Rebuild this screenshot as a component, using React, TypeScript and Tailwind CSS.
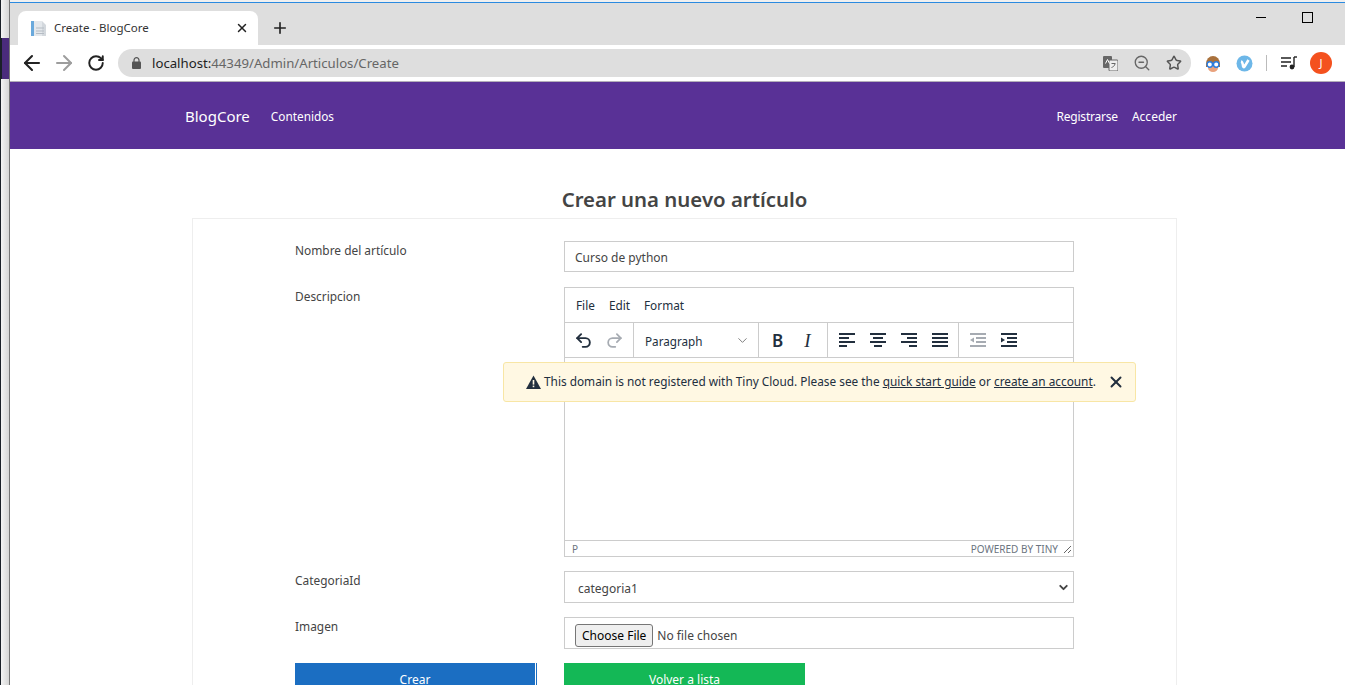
import React from "react";
import { ArrowLeft, ArrowRight, ChevronDown, Plus, Redo2, RotateCw, Star, Undo2, X, ZoomOut } from "lucide-react";

const font = { fontFamily: '"Noto Sans", sans-serif' };

const BrowserChrome: React.FC = () => (
  <div className="shrink-0">
    <div className="h-[2px] bg-[#f0f0f0]" />
    <div className="h-px bg-[#2b8ae0]" />
    <div className="flex h-[42px] items-end bg-[#dedede] pl-[8px]">
      <div className="flex h-[34px] w-[240px] items-center rounded-t-lg bg-white pl-[12px] pr-[9px]">
        <svg width="17" height="17" viewBox="0 0 17 17" className="mr-[7px]">
          <rect x="1" y="1" width="3" height="15" fill="#6aa9dc" />
          <rect x="4" y="1" width="8" height="15" fill="#e4e8ec" />
          <path d="M12 1l4 4v11h-4z" fill="#d3d8dd" />
          <path d="M6 8h8M6 11h8M6 13.5h8" stroke="#b5bcc4" strokeWidth="1" />
        </svg>
        <span className="flex-1 text-[11.5px] text-[#333]">Create - BlogCore</span>
        <X size={14} strokeWidth={2.5} className="text-[#222]" />
      </div>
      <Plus size={18} strokeWidth={2.2} className="mb-[8px] ml-[13px] text-[#222]" />
      <div className="flex-1" />
      <div className="mb-[22px] flex items-center gap-[36px] pr-[32px]">
        <div className="h-px w-[10px] bg-black" />
        <div className="h-[11px] w-[11px] border border-black" />
      </div>
    </div>
    <div className="flex h-[37px] items-center border-b border-[#b3aeb9] bg-white pl-[10px] pr-[12px]">
      <ArrowLeft size={24} strokeWidth={2.1} className="text-[#222]" />
      <ArrowRight size={24} strokeWidth={2} className="ml-[8px] text-[#9d9d9d]" />
      <RotateCw size={18} strokeWidth={2.6} className="ml-[11px] text-[#222]" />
      <div className="ml-[13px] flex h-[28px] w-[1073px] items-center rounded-full bg-[#dedede] pl-[14px] pr-[9px]">
        <svg width="9" height="12" viewBox="0 0 9 12">
          <path d="M2 5V3.2a2.5 2.5 0 0 1 5 0V5" stroke="#555" strokeWidth="1.2" fill="none" />
          <rect x="0" y="4.5" width="9" height="7.5" rx="1" fill="#555" />
        </svg>
        <span className="ml-[11px] flex-1 pt-[2px] text-[13.2px] text-[#666]">
          <span className="text-[#222]">localhost:</span>44349/Admin/Articulos/Create
        </span>
        <svg width="15" height="15" viewBox="0 0 15 15">
          <rect x="0" y="0" width="9" height="12" rx="1" fill="#666" />
          <rect x="6" y="4" width="9" height="11" rx="1" fill="#eee" stroke="#666" />
          <path d="M2.5 7.5l2-4 2 4" stroke="#fff" fill="none" />
          <path d="M8.5 7.5h4M10.5 7v1M12 8c-.5 2-2 3-3.5 3.5" stroke="#666" fill="none" />
        </svg>
        <ZoomOut size={18} strokeWidth={1.8} className="ml-[15px] text-[#666]" />
        <Star size={16} strokeWidth={2.2} className="ml-[15px] text-[#555]" />
      </div>
      <svg width="16" height="17" viewBox="0 0 16 17" className="ml-[14px]">
        <path d="M1 9a7 8 0 0 1 14 0v3H1z" fill="#a9713c" />
        <path d="M3 9h10v4a5 4 0 0 1-10 0z" fill="#e9a27d" />
        <circle cx="4.8" cy="9.5" r="2.7" fill="#fff" stroke="#2a7de1" strokeWidth="1.4" />
        <circle cx="11.2" cy="9.5" r="2.7" fill="#fff" stroke="#2a7de1" strokeWidth="1.4" />
      </svg>
      <svg width="17" height="17" viewBox="0 0 17 17" className="ml-[15px]">
        <circle cx="8.5" cy="8.5" r="8" fill="#6db7e8" />
        <path d="M5 6.5c1 .2 1.7.8 2.2 5 .5.8 1 .8 1.3.2L12.5 5" stroke="#fff" strokeWidth="2.6" fill="none" />
      </svg>
      <div className="ml-[13px] h-[16px] w-px bg-[#bbb]" />
      <svg width="16" height="14" viewBox="0 0 16 14" className="ml-[14px]">
        <path d="M0 2h10M0 6h10M0 10h6" stroke="#222" strokeWidth="1.4" />
        <path d="M13 1v10" stroke="#222" strokeWidth="1.4" />
        <path d="M13 1h3" stroke="#222" strokeWidth="1.4" />
        <circle cx="11" cy="11" r="2.4" fill="#222" />
      </svg>
      <div className="ml-[13px] flex h-[22px] w-[22px] items-center justify-center rounded-full bg-[#f4511e] text-[11px] text-white">
        J
      </div>
    </div>
  </div>
);

const NavBar: React.FC = () => (
  <nav className="flex h-[67px] shrink-0 items-center bg-[#593196] pl-[175px] pr-[168px] pt-[3px] text-white">
    <span className="pb-[2px] text-[15px]">BlogCore</span>
    <span className="ml-[21px] text-[11.8px]">Contenidos</span>
    <div className="flex-1" />
    <span className="text-[12px] tracking-[-0.2px]">Registrarse</span>
    <span className="ml-[14px] text-[12px]">Acceder</span>
  </nav>
);

const ToolGroup: React.FC<{ className?: string; children: React.ReactNode }> = ({ className, children }) => (
  <div className={`flex h-full items-center border-r border-[#cccccc] ${className ?? ""}`}>{children}</div>
);

// tiny's align icons: four bars, [x, width] per row
const BarsIcon: React.FC<{ rows: number[][] }> = ({ rows }) => (
  <svg width="16" height="14" viewBox="0 0 16 14" fill="#222f3e">
    {rows.map(([x, w], i) => (
      <rect key={i} x={x} y={i * 4} width={w} height="2" />
    ))}
  </svg>
);

const IndentIcon: React.FC<{ out?: boolean }> = ({ out }) => (
  <svg width="16" height="14" viewBox="0 0 16 14" fill={out ? "#a6abb2" : "#222f3e"}>
    <rect x="0" y="0" width="16" height="2" />
    <rect x="6" y="4" width="10" height="2" />
    <rect x="6" y="8" width="10" height="2" />
    <rect x="0" y="12" width="16" height="2" />
    {out ? <path d="M0 7l4-2.6v5.2z" /> : <path d="M4 7L0 4.4v5.2z" />}
  </svg>
);

const Editor: React.FC = () => (
  <div className="relative flex h-[270px] w-[510px] flex-col border border-[#cccccc] text-[#222f3e]">
    <div className="flex h-[35px] shrink-0 items-center gap-[14px] border-b border-[#cccccc] pl-[11px] pt-[2px] text-[11.8px]">
      <span>File</span>
      <span>Edit</span>
      <span>Format</span>
    </div>
    <div className="flex h-[35px] shrink-0 items-center border-b border-[#cccccc]">
      <ToolGroup className="w-[69px] gap-[12px] pl-[9px]">
        <Undo2 size={19} strokeWidth={2.4} />
        <Redo2 size={19} strokeWidth={2.2} className="text-[#a6abb2]" />
      </ToolGroup>
      <ToolGroup className="w-[125px] justify-between pl-[11px] pr-[8px] text-[11.7px]">
        <span className="pt-[4px]">Paragraph</span>
        <ChevronDown size={15} strokeWidth={1.5} className="text-[#777]" />
      </ToolGroup>
      <ToolGroup className="w-[69px] pl-[13px]">
        <span className="text-[17px] font-semibold leading-none">B</span>
        <span className="ml-[21px] text-[19px] italic leading-none" style={{ fontFamily: '"Liberation Serif", serif' }}>
          I
        </span>
      </ToolGroup>
      <ToolGroup className="w-[131px] gap-[15px] pl-[11px]">
        <BarsIcon rows={[[0, 16], [0, 10], [0, 16], [0, 8]]} />
        <BarsIcon rows={[[0, 16], [3, 10], [0, 16], [4, 8]]} />
        <BarsIcon rows={[[0, 16], [6, 10], [0, 16], [8, 8]]} />
        <BarsIcon rows={[[0, 16], [0, 16], [0, 16], [0, 16]]} />
      </ToolGroup>
      <div className="flex items-center gap-[15px] pl-[11px]">
        <IndentIcon out />
        <IndentIcon />
      </div>
    </div>
    <div className="flex-1" />
    <div className="flex h-[16px] shrink-0 items-center justify-between border-t border-[#cccccc] pl-[7px] pr-[1px] pt-[2px] text-[10px] text-[#6b7480]">
      <span>P</span>
      <div className="flex items-center gap-[5px]">
        <span>POWERED BY TINY</span>
        <svg width="9" height="9" viewBox="0 0 9 9">
          <path d="M8 1L1 8M8 5L5 8" stroke="#666" strokeWidth="1" />
        </svg>
      </div>
    </div>
    <div className="absolute left-[-62px] top-[74px] flex h-[40px] w-[633px] items-center rounded-[3px] border border-[#f8e6a5] bg-[#fff8e3] pl-[22px] text-[11.83px] text-[#222f3e]">
      <svg width="15" height="14" viewBox="0 0 15 14" className="mr-[3px]">
        <path d="M7.5 0.5L15 14H0z" fill="#222f3e" />
        <rect x="6.7" y="5" width="1.6" height="4.6" fill="#fff8e3" />
        <rect x="6.7" y="10.6" width="1.6" height="1.6" fill="#fff8e3" />
      </svg>
      <span>
        This domain is not registered with Tiny Cloud. Please see the <span className="underline">quick start guide</span> or{" "}
        <span className="underline">create an account</span>.
      </span>
      <X size={18} strokeWidth={2.6} className="ml-[11px]" />
    </div>
  </div>
);

const Row: React.FC<{ label: string; className?: string; children: React.ReactNode }> = ({ label, className, children }) => (
  <div className={`flex items-start ${className ?? ""}`}>
    <label className="w-[269px] pt-[1px] text-[11.9px] text-[#444]">{label}</label>
    {children}
  </div>
);

const App: React.FC = () => (
  <div className="flex h-[685px] w-[1345px] overflow-hidden bg-white" style={font}>
    <div className="flex w-[9px] shrink-0 flex-col border-l border-[#1a2028] bg-gradient-to-r from-[#f4f4f4] to-[#d6d6d6]">
      <div className="h-[38px]" />
      <div className="h-[41px] border-l border-[#1a2028] bg-[#4a2b7c]" />
    </div>
    <div className="flex min-w-0 flex-1 flex-col border-l border-[#777]">
      <BrowserChrome />
      <NavBar />
      <main className="flex flex-col items-center">
        <h1 className="mt-[35px] h-[34px] pl-[14px] text-[20.4px] font-semibold leading-[30px] text-[#444]">
          Crear una nuevo artículo
        </h1>
        <div className="ml-[14px] flex w-[985px] flex-col gap-[14px] border border-[#eeeeee] pl-[102px] pt-[22px]">
          <Row label="Nombre del artículo">
            <div className="flex h-[31px] w-[510px] items-center border border-[#cccccc] pl-[10px] pt-[2px] text-[12px] text-[#444]">
              Curso de python
            </div>
          </Row>
          <Row label="Descripcion" className="mt-px">
            <Editor />
          </Row>
          <Row label="CategoriaId">
            <div className="flex h-[32px] w-[510px] items-center justify-between border border-[#cccccc] pl-[13px] pr-[3px] text-[12px] text-[#444]">
              <span className="pt-[4px]">categoria1</span>
              <ChevronDown size={13} strokeWidth={3.5} className="text-[#444]" />
            </div>
          </Row>
          <Row label="Imagen">
            <div className="flex h-[32px] w-[510px] items-center border border-[#cccccc] pl-[10px] pt-[5px] text-[12px] text-[#444]">
              <button className="h-[23px] rounded-[3px] border border-[#767676] bg-[#efefef] px-[6px] text-[12px] text-black">
                Choose File
              </button>
              <span className="ml-[4px]">No file chosen</span>
            </div>
          </Row>
          <div className="flex items-start">
            <div className="border-r border-[#1b6ec2]">
              <button className="h-[33px] w-[241px] border-r border-white bg-[#1b6ec2] text-[12px] text-white">Crear</button>
            </div>
            <button className="ml-[27px] h-[33px] w-[241px] bg-[#14b856] text-[12px] text-white">Volver a lista</button>
          </div>
        </div>
      </main>
    </div>
  </div>
);

export default App;
